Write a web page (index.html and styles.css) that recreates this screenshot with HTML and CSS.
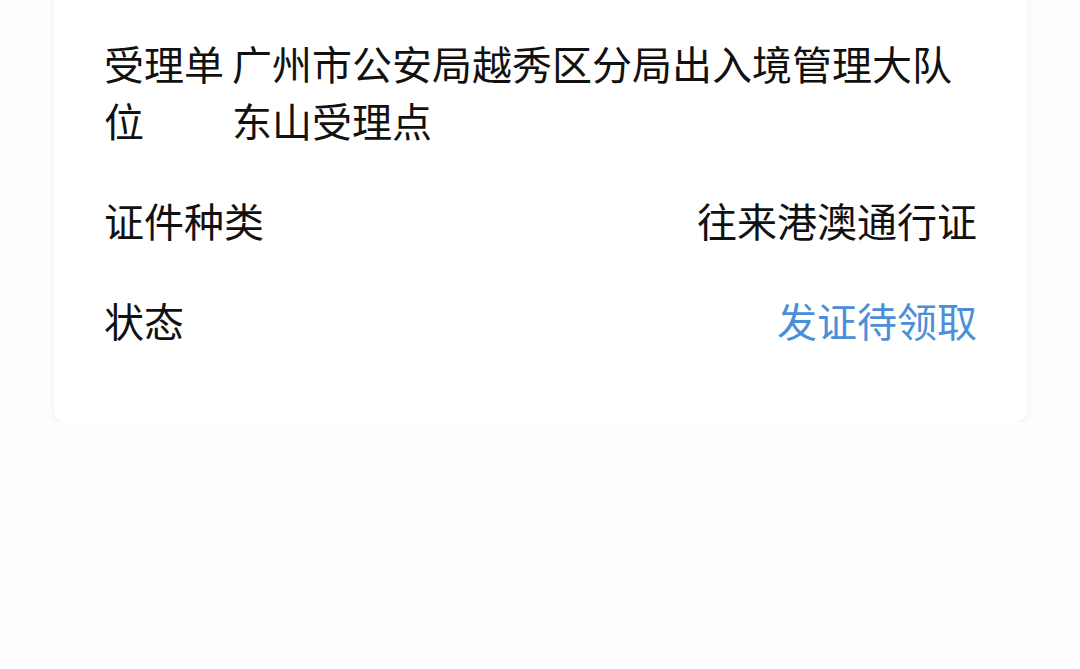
FILE: index.html
```html
<!DOCTYPE html>
<html lang="zh-CN">
<head>
  <meta charset="UTF-8">
  <title>受理信息</title>
  <link rel="stylesheet" href="styles.css">
</head>
<body>

<div class="card">

  <!--受理单位-->
  <div class="row wrap">
    <div class="label">受理单位</div>
    <div class="value">广州市公安局越秀区分局出入境管理大队东山受理点</div>
  </div>

  <!--证件种类-->
  <div class="row">
    <div class="name">证件种类</div>
    <div class="info">往来港澳通行证</div>
  </div>

  <!--状态-->
  <div class="row">
    <div class="name">状态</div>
    <div class="info status">发证待领取</div>
  </div>

</div>

</body>
</html>
```

FILE: styles.css
```css
* {
  margin: 0;
  padding: 0;
}

body {
  background-color: #fdfdfd;
  font-family: "Noto Sans CJK SC", "Noto Sans", sans-serif;
  font-size: 40px;
  line-height: 57px;
  color: #111;
}

/*卡片顶部被截掉，往上挪*/
.card {
  width: 873px;
  margin: -40px 0 0 54px;
  padding: 75px 50px 73px 50px;
  background-color: #fff;
  border-radius: 12px;
  box-shadow: 0 2px 6px rgba(0, 0, 0, .06);
  display: flex;
  flex-direction: column;
  gap: 43px;
}

.row {
  display: flex;
  justify-content: space-between;
}

/*受理单位：标签宽三个字，会折行*/
.wrap .label {
  width: 120px;
  flex-shrink: 0;
  margin-right: 8px;
}

.wrap .value {
  flex: 1;
}

.status {
  color: #4a8fd8;
}
```
